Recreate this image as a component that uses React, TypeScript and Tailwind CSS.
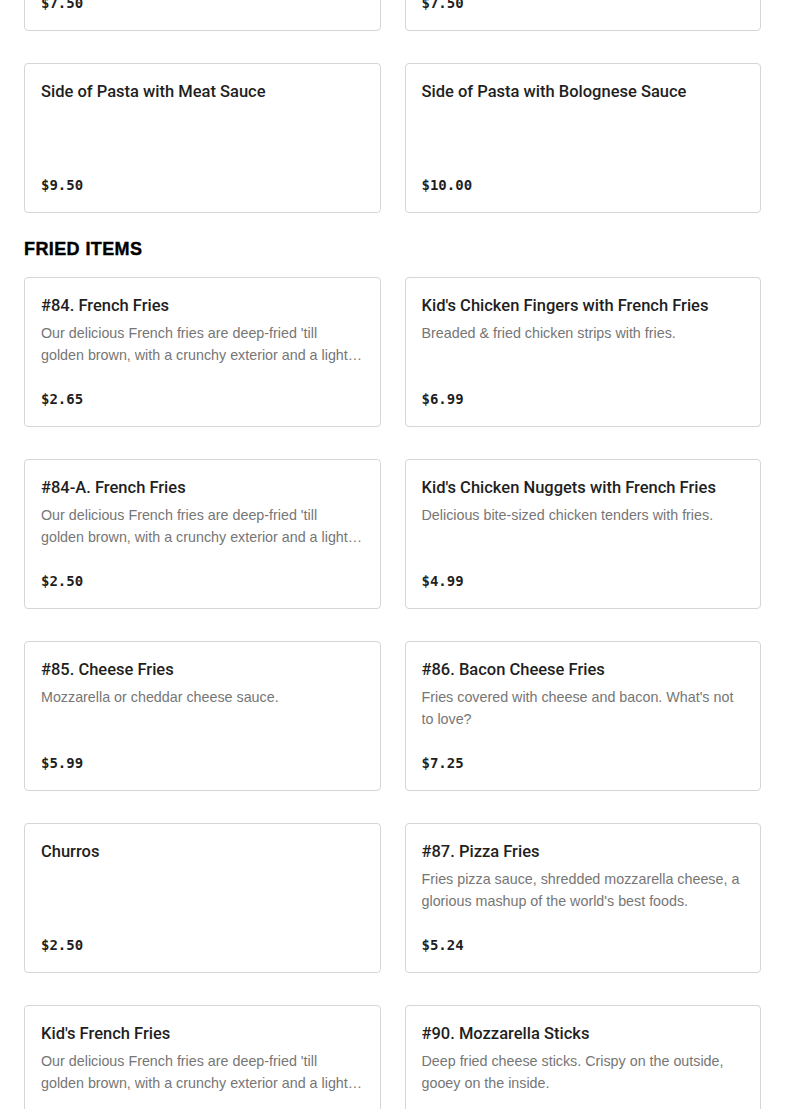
import React from "react";

type Item = { name: string; desc?: string; price: string };

const topRow: Item[] = [
  { name: "Side of Pasta with Marinara", price: "$7.50" },
  { name: "Side of Pasta with Alfredo", price: "$7.50" },
];

const pasta: Item[] = [
  { name: "Side of Pasta with Meat Sauce", price: "$9.50" },
  { name: "Side of Pasta with Bolognese Sauce", price: "$10.00" },
];

const fried: Item[] = [
  {
    name: "#84. French Fries",
    desc: "Our delicious French fries are deep-fried 'till golden brown, with a crunchy exterior and a light and fluffy interior.",
    price: "$2.65",
  },
  {
    name: "Kid's Chicken Fingers with French Fries",
    desc: "Breaded & fried chicken strips with fries.",
    price: "$6.99",
  },
  {
    name: "#84-A. French Fries",
    desc: "Our delicious French fries are deep-fried 'till golden brown, with a crunchy exterior and a light and fluffy interior.",
    price: "$2.50",
  },
  {
    name: "Kid's Chicken Nuggets with French Fries",
    desc: "Delicious bite-sized chicken tenders with fries.",
    price: "$4.99",
  },
  { name: "#85. Cheese Fries", desc: "Mozzarella or cheddar cheese sauce.", price: "$5.99" },
  {
    name: "#86. Bacon Cheese Fries",
    desc: "Fries covered with cheese and bacon. What's not to love?",
    price: "$7.25",
  },
  { name: "Churros", price: "$2.50" },
  {
    name: "#87. Pizza Fries",
    desc: "Fries pizza sauce, shredded mozzarella cheese, a glorious mashup of the world's best foods.",
    price: "$5.24",
  },
  {
    name: "Kid's French Fries",
    desc: "Our delicious French fries are deep-fried 'till golden brown, with a crunchy exterior and a light and fluffy interior.",
    price: "$2.50",
  },
  {
    name: "#90. Mozzarella Sticks",
    desc: "Deep fried cheese sticks. Crispy on the outside, gooey on the inside.",
    price: "$6.99",
  },
];

function Card({ item }: { item: Item }) {
  return (
    <div className="flex h-[150px] flex-col rounded-[4px] border border-[#d6d6d6] bg-white px-4 pt-4 pb-[17px]">
      <div className="text-[16.5px] leading-[24px] font-medium text-[#1f1f1f] [font-family:Roboto,Arial,sans-serif]">
        {item.name}
      </div>
      {item.desc && (
        <div className="mt-[4px] line-clamp-2 text-[14.3px] leading-[22px] text-[#767676] [font-family:'Liberation_Sans',Arial,sans-serif]">
          {item.desc}
        </div>
      )}
      <div className="mt-auto text-[14px] leading-[20px] font-bold text-[#1f1f1f] [font-family:'DejaVu_Sans_Mono',monospace]">
        {item.price}
      </div>
    </div>
  );
}

export default function App() {
  return (
    <div className="min-h-[1109px] overflow-hidden bg-white px-6">
      <div className="mt-[-119px] grid grid-cols-2 gap-x-6 gap-y-8">
        {topRow.map((it, i) => (
          <Card key={"t" + i} item={it} />
        ))}
        {pasta.map((it, i) => (
          <Card key={"p" + i} item={it} />
        ))}
      </div>
      <h2 className="mt-[24px] mb-[16px] text-[18px] leading-[24px] font-bold tracking-[0.4px] text-black [-webkit-text-stroke:0.4px_black] [font-family:'Liberation_Sans',Arial,sans-serif]">
        FRIED ITEMS
      </h2>
      <div className="grid grid-cols-2 gap-x-6 gap-y-8 pb-8">
        {fried.map((it, i) => (
          <Card key={"f" + i} item={it} />
        ))}
      </div>
    </div>
  );
}
